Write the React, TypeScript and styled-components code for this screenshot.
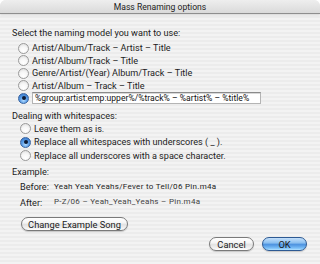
import styled, { createGlobalStyle } from "styled-components";

const GlobalStyle = createGlobalStyle`
  html, body {
    margin: 0;
    padding: 0;
    background: #ffffff;
  }
  body {
    font-family: Roboto, "Noto Sans", sans-serif;
    color: #1c1c1c;
  }
`;

const Window = styled.div`
  width: 320px;
  height: 264px;
  border-radius: 6px 6px 0 0;
  overflow: hidden;
  display: flex;
  flex-direction: column;
  background: repeating-linear-gradient(
    to bottom,
    #ececec 0px,
    #ececec 2px,
    #f3f3f3 2px,
    #f3f3f3 4px
  );
`;

const TitleBar = styled.div`
  height: 13px;
  flex: none;
  display: flex;
  align-items: center;
  justify-content: center;
  font-size: 8.6px;
  color: #222;
  background: linear-gradient(to bottom, #eeeeee, #dadada);
  border-bottom: 1px solid #8e8e8e;
  box-shadow: 0 1px 2px rgba(0, 0, 0, 0.12);
`;

const Body = styled.div`
  display: flex;
  flex-direction: column;
  padding: 0 13px 0 12px;
  font-size: 9.1px;
`;

const SectionLabel = styled.div<{ $top: number }>`
  margin-top: ${(p) => p.$top}px;
  line-height: 12px;
  height: 12px;
`;

const RadioGroup = styled.div<{ $indent: number; $top: number; $row: number }>`
  display: flex;
  flex-direction: column;
  margin-top: ${(p) => p.$top}px;
  padding-left: ${(p) => p.$indent}px;
  --row: ${(p) => p.$row}px;
`;

const RadioRow = styled.div`
  display: flex;
  align-items: center;
  gap: 3px;
  height: var(--row);
  white-space: nowrap;
`;

const Radio = styled.span<{ $on?: boolean }>`
  width: 11px;
  height: 11px;
  flex: none;
  border-radius: 50%;
  box-sizing: border-box;
  display: flex;
  align-items: center;
  justify-content: center;
  border: 1px solid ${(p) => (p.$on ? "#3a64a0" : "#9a9a9a")};
  background: ${(p) =>
    p.$on
      ? "radial-gradient(circle at 50% 70%, #b4dcff 0%, #5a9de6 45%, #2f6fc4 100%)"
      : "radial-gradient(circle at 50% 75%, #ffffff 0%, #f6f6f6 50%, #d8d8d8 100%)"};
  &::after {
    content: "";
    display: ${(p) => (p.$on ? "block" : "none")};
    width: 4px;
    height: 4px;
    border-radius: 50%;
    background: #0d1a33;
  }
`;

const TextField = styled.div`
  width: 229px;
  height: 12px;
  box-sizing: border-box;
  background: #ffffff;
  border: 1px solid #b4b4b4;
  border-top-color: #8a8a8a;
  box-shadow: inset 0 1px 0 #d8d8d8;
  padding: 0 2px;
  display: flex;
  align-items: center;
  font-size: 8.6px;
  color: #111;
  overflow: hidden;
  white-space: nowrap;
`;

const ExampleTable = styled.div`
  display: grid;
  grid-template-columns: 34px auto;
  grid-auto-rows: 15px;
  align-items: center;
  margin-top: 1.5px;
  padding-left: 8px;
`;

const ExampleKey = styled.span<{ $shift?: number }>`
  position: relative;
  top: ${(p) => p.$shift ?? 0}px;
`;

const ExampleValue = styled.span<{ $dim?: boolean }>`
  font-size: 8px;
  letter-spacing: 0.3px;
  color: ${(p) => (p.$dim ? "#444" : "#1c1c1c")};
  white-space: nowrap;
`;

const AquaButton = styled.button<{ $width: number; $primary?: boolean }>`
  width: ${(p) => p.$width}px;
  height: 14px;
  padding: 0;
  border-radius: 7px;
  font-family: Roboto, "Noto Sans", sans-serif;
  font-size: 9.3px;
  color: #1c1c1c;
  white-space: nowrap;
  display: flex;
  align-items: center;
  justify-content: center;
  box-sizing: border-box;
  border: 1px solid ${(p) => (p.$primary ? "#2d5a93" : "#7a7a7a")};
  background: ${(p) =>
    p.$primary
      ? "linear-gradient(to bottom, #c4e0fb 0%, #8cc0f0 40%, #4d93e0 55%, #7cc0f8 85%, #b5e3ff 100%)"
      : "linear-gradient(to bottom, #ffffff 0%, #f5f5f5 40%, #e2e2e2 55%, #f2f2f2 85%, #ffffff 100%)"};
  box-shadow: 0 1px 1px rgba(0, 0, 0, 0.18);
`;

const ChangeRow = styled.div`
  margin-top: 8px;
  padding-left: 9px;
`;

const Footer = styled.div`
  display: flex;
  justify-content: flex-end;
  gap: 8px;
  margin-top: 6px;
`;

const models = [
  "Artist/Album/Track – Artist – Title",
  "Artist/Album/Track – Title",
  "Genre/Artist/(Year) Album/Track – Title",
  "Artist/Album – Track – Title",
];

const spaces = [
  { label: "Leave them as is.", on: false },
  { label: "Replace all whitespaces with underscores ( _ ).", on: true },
  { label: "Replace all underscores with a space character.", on: false },
];

export default function App() {
  return (
    <>
      <GlobalStyle />
      <Window>
        <TitleBar>Mass Renaming options</TitleBar>
        <Body>
          <SectionLabel $top={13}>Select the naming model you want to use:</SectionLabel>
          <RadioGroup $indent={6} $top={2.75} $row={12.5}>
            {models.map((m) => (
              <RadioRow key={m}>
                <Radio />
                {m}
              </RadioRow>
            ))}
            <RadioRow>
              <Radio $on />
              <TextField>%group:artist:emp:upper%/%track% – %artist% – %title%</TextField>
            </RadioRow>
          </RadioGroup>
          <SectionLabel $top={5.5}>Dealing with whitespaces:</SectionLabel>
          <RadioGroup $indent={8} $top={0.25} $row={13.5}>
            {spaces.map((s) => (
              <RadioRow key={s.label}>
                <Radio $on={s.on} />
                {s.label}
              </RadioRow>
            ))}
          </RadioGroup>
          <SectionLabel $top={3.25}>Example:</SectionLabel>
          <ExampleTable>
            <ExampleKey>Before:</ExampleKey>
            <ExampleValue>Yeah Yeah Yeahs/Fever to Tell/06 Pin.m4a</ExampleValue>
            <ExampleKey $shift={1.5}>After:</ExampleKey>
            <ExampleValue $dim>P-Z/06 – Yeah_Yeah_Yeahs – Pin.m4a</ExampleValue>
          </ExampleTable>
          <ChangeRow>
            <AquaButton $width={107}>Change Example Song</AquaButton>
          </ChangeRow>
          <Footer>
            <AquaButton $width={45}>Cancel</AquaButton>
            <AquaButton $width={45} $primary>
              OK
            </AquaButton>
          </Footer>
        </Body>
      </Window>
    </>
  );
}
